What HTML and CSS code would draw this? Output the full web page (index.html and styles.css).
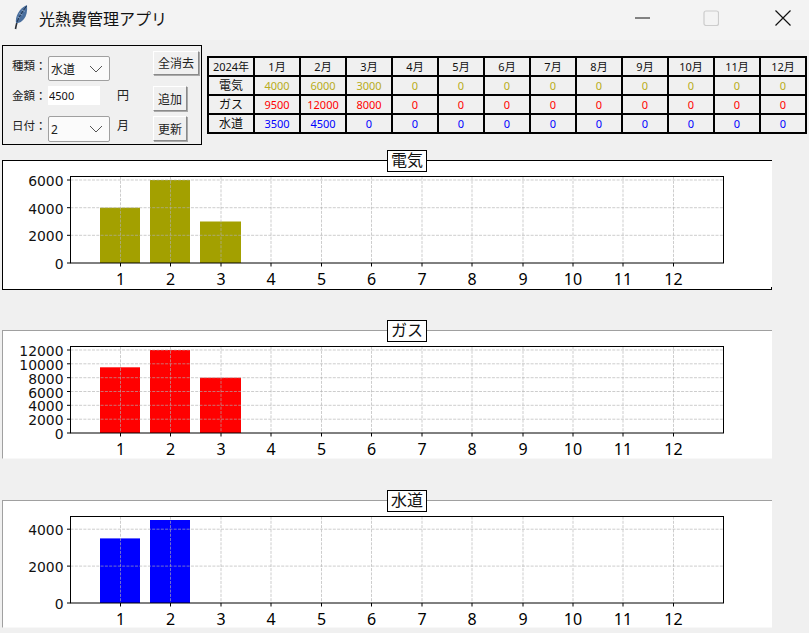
FILE: index.html
```html
<!DOCTYPE html>
<html lang="ja">
<head>
    <meta charset="UTF-8">
    <title>光熱費管理アプリ</title>
    <link rel="stylesheet" href="styles.css">
</head>
<body>
    <!-- Title bar -->
    <div class="titlebar">
        <svg class="app-icon" width="18" height="28" viewBox="0 0 18 28">
            <path d="M3.5 25 C4 22 4.6 20 5 18" fill="none" stroke="#2b2f36" stroke-width="1.6"/>
            <path d="M4 19 C3 13 7 4 15 1 C15.6 7 14.5 12 12 15 C10 17.5 7 19.6 4 19 Z" fill="#4a6f9e"/>
            <path d="M5 18 C7 13 10 8 14.6 2" fill="none" stroke="#1e2c42" stroke-width="0.9"/>
            <path d="M5.5 13 L8 14 M7 9.5 L10.5 11 M9.6 6 L13 7.4" stroke="#9db6d4" stroke-width="0.7"/>
        </svg>
        <span class="app-title">光熱費管理アプリ</span>
        <div class="window-buttons">
            <svg width="16" height="16" viewBox="0 0 16 16"><path d="M0 8 H15" stroke="#111" stroke-width="1"/></svg>
            <svg width="16" height="16" viewBox="0 0 16 16"><rect x="1" y="1" width="14.5" height="14.5" rx="2" fill="none" stroke="#ccc" stroke-width="1.2"/></svg>
            <svg width="16" height="16" viewBox="0 0 16 16"><path d="M0.5 0.5 L15.5 15.5 M15.5 0.5 L0.5 15.5" stroke="#111" stroke-width="1.2"/></svg>
        </div>
    </div>

    <div class="top-row">
        <!-- Input panel -->
        <div class="controls">
            <div class="form-col">
                <span class="label">種類：</span>
                <div class="combo"><span>水道</span><svg width="14" height="8" viewBox="0 0 14 8"><path d="M1 1 L7 7 L13 1" fill="none" stroke="#555" stroke-width="1"/></svg></div>
                <span></span>

                <span class="label">金額：</span>
                <input class="entry" type="text" value="4500">
                <span class="label unit">円</span>

                <span class="label">日付：</span>
                <div class="combo"><span>2</span><svg width="14" height="8" viewBox="0 0 14 8"><path d="M1 1 L7 7 L13 1" fill="none" stroke="#555" stroke-width="1"/></svg></div>
                <span class="label unit">月</span>
            </div>
            <div class="btn-col">
                <button class="btn btn-clear">全消去</button>
                <button class="btn">追加</button>
                <button class="btn">更新</button>
            </div>
        </div>

        <!-- Monthly table -->
        <table class="summary">
            <tr>
                <td>2024年</td><td>1月</td><td>2月</td><td>3月</td><td>4月</td><td>5月</td><td>6月</td><td>7月</td><td>8月</td><td>9月</td><td>10月</td><td>11月</td><td>12月</td>
            </tr>
            <tr class="elec">
                <th>電気</th><td>4000</td><td>6000</td><td>3000</td><td>0</td><td>0</td><td>0</td><td>0</td><td>0</td><td>0</td><td>0</td><td>0</td><td>0</td>
            </tr>
            <tr class="gas">
                <th>ガス</th><td>9500</td><td>12000</td><td>8000</td><td>0</td><td>0</td><td>0</td><td>0</td><td>0</td><td>0</td><td>0</td><td>0</td><td>0</td>
            </tr>
            <tr class="water">
                <th>水道</th><td>3500</td><td>4500</td><td>0</td><td>0</td><td>0</td><td>0</td><td>0</td><td>0</td><td>0</td><td>0</td><td>0</td><td>0</td>
            </tr>
        </table>
    </div>

    <!-- Shared x axis for the three charts -->
    <svg class="defs" width="0" height="0">
        <defs>
            <g id="xAxis">
                <g class="grid">
                    <path d="M117.5 15.5V102 M167.5 15.5V102 M218 15.5V102 M268 15.5V102 M318.5 15.5V102 M368.5 15.5V102 M419 15.5V102 M469 15.5V102 M520 15.5V102 M570 15.5V102 M620 15.5V102 M670.5 15.5V102"/>
                </g>
                <path class="tick" d="M117.5 102v3.5 M167.5 102v3.5 M218 102v3.5 M268 102v3.5 M318.5 102v3.5 M368.5 102v3.5 M419 102v3.5 M469 102v3.5 M520 102v3.5 M570 102v3.5 M620 102v3.5 M670.5 102v3.5"/>
                <rect class="axes" x="67.5" y="15.5" width="653" height="86.5"/>
                <g class="tick-x">
                    <text x="117.5" y="123.5">1</text><text x="167.5" y="123.5">2</text><text x="218" y="123.5">3</text><text x="268" y="123.5">4</text>
                    <text x="318.5" y="123.5">5</text><text x="368.5" y="123.5">6</text><text x="419" y="123.5">7</text><text x="469" y="123.5">8</text>
                    <text x="520" y="123.5">9</text><text x="570" y="123.5">10</text><text x="620" y="123.5">11</text><text x="670.5" y="123.5">12</text>
                </g>
            </g>
        </defs>
    </svg>

    <div class="charts">
        <div class="chart-frame first">
            <span class="chart-title">電気</span>
            <svg class="chart" width="769" height="128" viewBox="0 0 769 128">
                <g fill="#a3a000">
                    <rect x="97" y="46.7" width="40" height="55.3"/>
                    <rect x="147" y="19" width="40" height="83"/>
                    <rect x="197" y="60.5" width="41" height="41.5"/>
                </g>
                <path class="grid-h" d="M67.5 19H720.5 M67.5 46.7H720.5 M67.5 74.3H720.5"/>
                <use href="#xAxis"/>
                <path class="tick" d="M64 19h3.5 M64 46.7h3.5 M64 74.3h3.5 M64 102h3.5"/>
                <g class="tick-y">
                    <text x="60.5" y="25">6000</text><text x="60.5" y="52.7">4000</text><text x="60.5" y="80.3">2000</text><text x="60.5" y="107.5">0</text>
                </g>
            </svg>
        </div>

        <div class="chart-frame">
            <span class="chart-title">ガス</span>
            <svg class="chart" width="769" height="127" viewBox="0 0 769 127">
                <g fill="#ff0000">
                    <rect x="97" y="36.3" width="40" height="65.7"/>
                    <rect x="147" y="19" width="40" height="83"/>
                    <rect x="197" y="46.7" width="41" height="55.3"/>
                </g>
                <path class="grid-h" d="M67.5 19H720.5 M67.5 32.8H720.5 M67.5 46.7H720.5 M67.5 60.5H720.5 M67.5 74.3H720.5 M67.5 88.2H720.5"/>
                <use href="#xAxis"/>
                <path class="tick" d="M64 19h3.5 M64 32.8h3.5 M64 46.7h3.5 M64 60.5h3.5 M64 74.3h3.5 M64 88.2h3.5 M64 102h3.5"/>
                <g class="tick-y">
                    <text x="60.5" y="25">12000</text><text x="60.5" y="38.8">10000</text><text x="60.5" y="52.7">8000</text><text x="60.5" y="66.5">6000</text>
                    <text x="60.5" y="80.3">4000</text><text x="60.5" y="94.2">2000</text><text x="60.5" y="107.5">0</text>
                </g>
            </svg>
        </div>

        <div class="chart-frame last">
            <span class="chart-title">水道</span>
            <svg class="chart" width="769" height="126" viewBox="0 0 769 126">
                <g fill="#0000ff">
                    <rect x="97" y="37.4" width="40" height="64.6"/>
                    <rect x="147" y="19" width="40" height="83"/>
                </g>
                <path class="grid-h" d="M67.5 28.2H720.5 M67.5 65.1H720.5"/>
                <use href="#xAxis"/>
                <path class="tick" d="M64 28.2h3.5 M64 65.1h3.5 M64 102h3.5"/>
                <g class="tick-y">
                    <text x="60.5" y="34.2">4000</text><text x="60.5" y="71.1">2000</text><text x="60.5" y="107.5">0</text>
                </g>
            </svg>
        </div>
    </div>
</body>
</html>
```

FILE: styles.css
```css
* {
    margin: 0;
    padding: 0;
    box-sizing: border-box;
}

body {
    width: 809px;
    height: 633px;
    overflow: hidden;
    background: #f0f0f0;
    font-family: "Noto Sans", "Noto Sans CJK JP", sans-serif;
    color: #222;
}

/* Title bar */
.titlebar {
    display: flex;
    align-items: center;
    height: 40px;
    padding-left: 12px;
    background: #f3f3f3;
}

.app-icon {
    margin: 0 9px 4px 0;
}

.app-title {
    font-size: 16px;
    color: #111;
    margin-bottom: 4px;
}

.window-buttons {
    display: flex;
    gap: 52px;
    margin: 0 18px 5px auto;
}

.window-buttons svg:nth-child(2) {
    margin-right: 4px;
}

/* Top row */
.top-row {
    display: flex;
    align-items: flex-start;
    height: 105px;
    padding: 5px 0 0 2px;
}

.controls {
    display: flex;
    width: 200px;
    height: 100px;
    border: 1px solid #000;
}

.form-col {
    display: grid;
    grid-template-columns: 36px 62px 43px;
    grid-template-rows: 25px 25px 26px;
    row-gap: 5px;
    padding: 10px 0 0 9px;
}

.label {
    font-size: 11.5px;
    line-height: 20px;
}

.unit {
    font-size: 12px;
    padding-left: 7px;
}

.combo {
    display: flex;
    align-items: center;
    justify-content: space-between;
    padding: 0 6px 0 2px;
    background: #fbfbfb;
    border: 1px solid #a0a0a0;
    border-radius: 2px;
    font-size: 12px;
}

.entry {
    width: 52px;
    height: 19px;
    padding-left: 1px;
    border: none;
    background: #fff;
    font-family: inherit;
    font-size: 11px;
    color: #111;
}

.btn-col {
    display: flex;
    flex-direction: column;
    align-items: flex-start;
    padding-top: 5px;
}

.btn {
    width: 34px;
    height: 25px;
    background: #f0f0f0;
    border: 1px solid;
    border-color: #fff #8a8a8a #8a8a8a #fff;
    box-shadow: 1px 1px 0 #aaa;
    font-family: inherit;
    font-size: 12px;
    color: #222;
}

.btn + .btn {
    margin-top: 5px;
}

.btn-clear {
    width: 46px;
    height: 24px;
    margin-bottom: 6px;
}

/* Monthly table */
.summary {
    margin: 11px 0 0 5px;
    border-collapse: collapse;
    table-layout: fixed;
    width: 599px;
    font-size: 11px;
    color: #111;
}

.summary td, .summary th {
    width: 46px;
    height: 19px;
    padding: 0;
    border: 2px solid #000;
    text-align: center;
    font-weight: normal;
    line-height: 15px;
}

.summary th {
    font-size: 12px;
    color: #111;
}

.elec td { color: #b8ac20; }
.gas td { color: #ff0000; }
.water td { color: #0000ff; }

/* Charts */
.defs {
    position: absolute;
}

.charts {
    display: flex;
    flex-direction: column;
    padding: 15px 0 0 2px;
}

.chart-frame {
    position: relative;
    width: 770px;
    height: 129px;
    margin-top: 40px;
    background: #fff;
    border-top: 1px solid #a0a0a0;
    border-left: 1px solid #a0a0a0;
    border-bottom: 1px solid #f8f8f8;
}

.chart-frame.first {
    height: 130px;
    margin-top: 0;
    border-color: #000;
}

/* small stub of the frame's right edge */
.chart-frame.first::after {
    content: '';
    position: absolute;
    right: 0;
    bottom: 0;
    width: 1px;
    height: 2px;
    background: #000;
}

.chart-frame.last {
    height: 128px;
    margin-top: 41px;
}

.chart-title {
    position: absolute;
    top: -11px;
    left: 384px;
    width: 40px;
    height: 22px;
    background: #fff;
    border: 1px solid #000;
    font-size: 16px;
    line-height: 18px;
    text-align: center;
    color: #111;
}

.chart {
    display: block;
}

.chart text {
    font-family: "DejaVu Sans", sans-serif;
    font-size: 13.9px;
    fill: #111;
}

.tick-x text {
    text-anchor: middle;
}

.tick-y text {
    text-anchor: end;
}

.grid path, .grid-h {
    fill: none;
    stroke: #b0b0b0;
    stroke-width: 0.8;
    stroke-dasharray: 3 1.3;
    stroke-opacity: 0.8;
}

.tick {
    fill: none;
    stroke: #000;
    stroke-width: 1;
}

.axes {
    fill: none;
    stroke: #000;
    stroke-width: 1;
}
```
